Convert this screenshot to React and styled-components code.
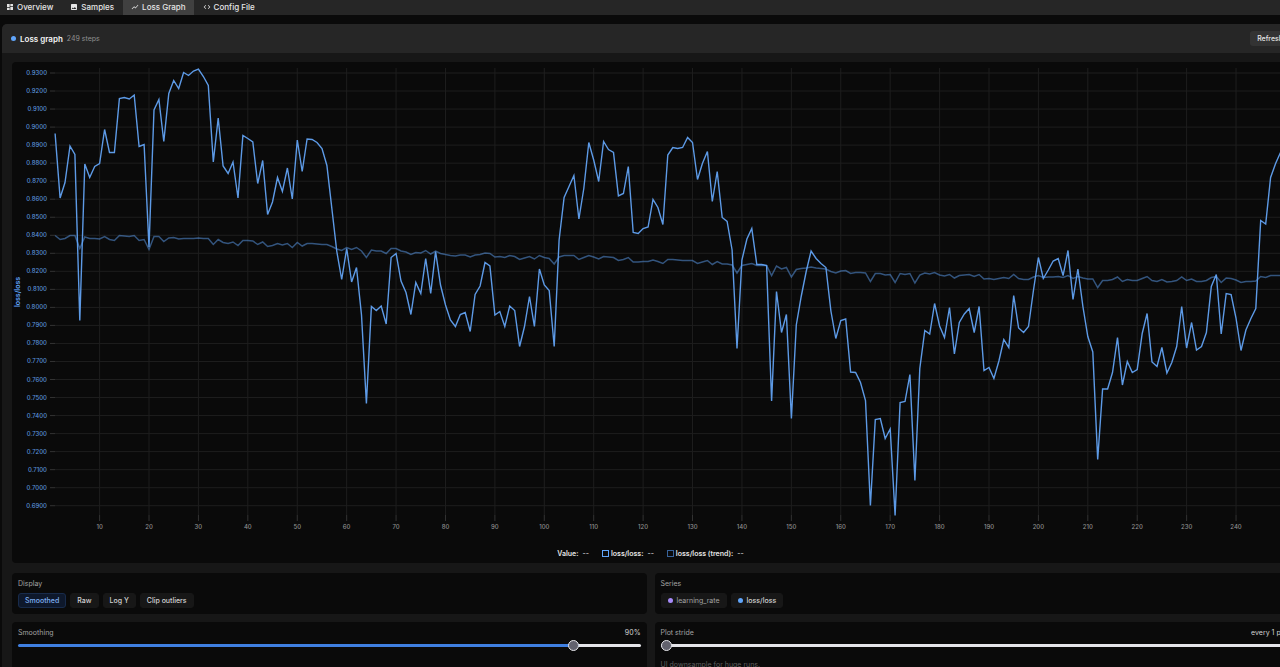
import { useState } from "react";
import styled, { createGlobalStyle } from "styled-components";
import { MdCode, MdDashboard, MdImage, MdShowChart } from "react-icons/md";

const GlobalStyle = createGlobalStyle`
  * {
    box-sizing: border-box;
  }
  body {
    margin: 0;
    background: #0a0a0a;
    color: #e5e5e5;
    font-family: Inter, "Liberation Sans", sans-serif;
    overflow: hidden;
  }
  button {
    font-family: inherit;
    cursor: pointer;
  }
`;

const Page = styled.div`
  width: 100%;
  min-width: 1301px;
  height: 100vh;
  overflow: hidden;
`;

const Tabs = styled.nav`
  display: flex;
  height: 15px;
  background: #262626;
`;

const Tab = styled.button`
  display: flex;
  align-items: center;
  gap: 3px;
  padding: 0 8px 2px;
  margin-right: 1px;
  border: none;
  background: ${(props) => (props.$active ? "#404040" : "transparent")};
  color: #e5e5e5;
  font-size: 8px;
  font-weight: 500;
  line-height: 12px;

  &:first-child {
    padding-left: 6px;
  }
`;

const Panel = styled.section`
  margin: 9px 2px 0;
  background: #171717;
  border-radius: 5px 5px 0 0;
  overflow: hidden;
`;

const PanelHeader = styled.header`
  display: flex;
  align-items: center;
  height: 29px;
  padding: 0 9px;
  background: #262626;
`;

const Dot = styled.span`
  width: 5px;
  height: 5px;
  border-radius: 50%;
  background: ${(props) => props.$color};
`;

const Title = styled.h1`
  margin: 0 4px;
  font-size: 8px;
  font-weight: 600;
  line-height: 12px;
  color: #f5f5f5;
`;

const Steps = styled.span`
  font-size: 7px;
  line-height: 12px;
  color: #8f8f8f;
`;

const Refresh = styled.button`
  margin-left: auto;
  height: 15px;
  padding: 0 7px;
  border: none;
  border-radius: 3px;
  background: #333333;
  color: #e5e5e5;
  font-size: 7px;
  font-weight: 500;
`;

const PanelBody = styled.div`
  padding: 9px 10px 12px;
`;

const ChartCard = styled.div`
  background: #0a0a0a;
  border-radius: 4px;
  overflow: hidden;
`;

const Plot = styled.svg`
  display: block;
  width: 100%;
  height: auto;
`;

const YLabel = styled.text`
  font-size: 6px;
  font-weight: 500;
  fill: #5b93dd;
  text-anchor: end;
`;

const XLabel = styled.text`
  font-size: 6px;
  font-weight: 500;
  fill: #8f8f8f;
  text-anchor: middle;
`;

const AxisTitle = styled.text`
  font-size: 7px;
  font-weight: 600;
  fill: #60a5fa;
  text-anchor: middle;
`;

const Legend = styled.div`
  display: flex;
  align-items: center;
  justify-content: center;
  gap: 13px;
  height: 19px;
  font-size: 7px;
  font-weight: 600;
  color: #e5e5e5;
`;

const LegendItem = styled.span`
  display: flex;
  align-items: center;
  gap: 2px;
`;

const Swatch = styled.i`
  width: 7px;
  height: 7px;
  border: 1px solid ${(props) => props.$color};
`;

const LegendValue = styled.span`
  margin-left: 2px;
  font-weight: 400;
`;

const Controls = styled.div`
  display: grid;
  grid-template-columns: 1fr 1fr;
  gap: 8px;
  margin-top: 10px;
`;

const Card = styled.div`
  padding: 6px;
  background: #0a0a0a;
  border-radius: 4px;
`;

const CardHead = styled.div`
  display: flex;
  justify-content: space-between;
  font-size: 7px;
  line-height: 10px;
  color: #a3a3a3;
`;

const Amount = styled.output`
  color: #d4d4d4;
`;

const Chips = styled.div`
  display: flex;
  gap: 4px;
  margin-top: 4px;
`;

const Chip = styled.button`
  display: flex;
  align-items: center;
  gap: 4px;
  height: 15px;
  padding: 0 6px;
  border: 1px solid ${(props) => (props.$active ? "#182b4b" : "#171717")};
  border-radius: 3px;
  background: ${(props) => (props.$active ? "#0e182b" : "#171717")};
  color: ${(props) =>
    props.$active ? "#7fb0f2" : props.$muted ? "#a3a3a3" : "#d4d4d4"};
  font-size: 7px;
  font-weight: ${(props) => (props.$muted ? 400 : 500)};
`;

const Slider = styled.input`
  display: block;
  appearance: none;
  width: 100%;
  height: 11px;
  margin: 2px 0 0;
  background: transparent;

  &::-webkit-slider-runnable-track {
    height: 3px;
    border-radius: 2px;
    background: linear-gradient(
      to right,
      #3f7fe0 ${(props) => props.$fill}%,
      #e5e5e9 ${(props) => props.$fill}%
    );
  }
  &::-webkit-slider-thumb {
    appearance: none;
    width: 11px;
    height: 11px;
    margin-top: -4px;
    border: 1px solid #e5e5e9;
    border-radius: 50%;
    background: #62626e;
  }
`;

const Hint = styled.p`
  margin: 9px 0 0;
  font-size: 7px;
  line-height: 10px;
  color: #5f5f5f;
`;

const tabs = [
  { name: "Overview", Icon: MdDashboard },
  { name: "Samples", Icon: MdImage },
  { name: "Loss Graph", Icon: MdShowChart },
  { name: "Config File", Icon: MdCode },
];

// plot heights, one per step
const loss = [
  133.5, 198, 182.5, 146, 154.5, 320.5, 164, 177.5, 166.5, 163.5,
  129.5, 152.5, 152.5, 98.5, 97.5, 99, 95, 146.5, 144.5, 247,
  110, 99.5, 141.5, 93.5, 80.5, 88.5, 72.5, 75.5, 71, 69,
  76.5, 85.5, 162, 118, 166, 173.5, 162, 198, 135.5, 138.5,
  142, 183.5, 160.5, 214.5, 202, 177.5, 191.5, 168, 199, 140,
  171.5, 139, 139.5, 142.5, 148.5, 165.5, 208, 251.5, 279.5, 248.5,
  282, 267.5, 315, 403.5, 306.5, 310.5, 306, 324, 257.5, 253.5,
  281, 292.5, 314.5, 282.5, 293.5, 258.5, 293.5, 251.5, 285, 305,
  320, 326.5, 314.5, 312.5, 331.5, 294.5, 286, 262.5, 266, 315,
  311.5, 326.5, 306, 310.5, 346.5, 326.5, 296.5, 326.5, 269, 285,
  290.5, 346.5, 240, 197.5, 186.5, 175.5, 219, 188.5, 142.5, 160,
  181.5, 141.5, 149.5, 152.5, 196, 193.5, 166.5, 232.5, 233.5, 228.5,
  227, 199.5, 207.5, 224.5, 155, 147.5, 148.5, 147.5, 137.5, 142.5,
  179.5, 163.5, 151.5, 201.5, 171.5, 217.5, 221.5, 250, 348.5, 260,
  239, 228.5, 264.5, 264.5, 265.5, 401, 291.5, 332.5, 314.5, 418.5,
  325, 296.5, 271.5, 251, 258.5, 263.5, 267.5, 311, 338.5, 320.5,
  319, 372, 372.5, 382.5, 400.5, 505.5, 419.5, 418.5, 438.5, 429,
  515.5, 402.5, 401.5, 374.5, 480.5, 368.5, 330.5, 334, 303.5, 326,
  337.5, 307.5, 354, 322.5, 314, 308.5, 332.5, 306.5, 370.5, 367.5,
  378.5, 361, 339.5, 347.5, 295.5, 328, 332.5, 326.5, 290, 257.5,
  278.5, 270, 261, 258.5, 275.5, 250.5, 299.5, 269, 306.5, 336.5,
  352, 459.5, 389, 389, 372.5, 337.5, 385, 361.5, 372.5, 369.5,
  333.5, 313.5, 362, 366.5, 347.5, 373, 362.5, 346.5, 306.5, 348,
  322.5, 350, 346.5, 332.5, 286.5, 274.5, 334, 293.5, 294.5, 318,
  350.5, 330, 318.5, 308.5, 220.5, 224, 177.5, 163.5, 152.5,
];

const trend = [
  235.5, 239.5, 238.5, 235.5, 235.5, 248.5, 237, 238.5, 238.5, 239,
  236.5, 239.5, 240.5, 235.5, 236, 236.5, 235.5, 240.5, 239.5, 249.5,
  236.5, 236.5, 241.5, 238, 237.5, 239, 238.5, 238.5, 238.5, 238,
  238.5, 238.5, 244.5, 239.5, 242.5, 243.5, 242, 245.5, 240.5, 240.5,
  241, 244.5, 242, 246.5, 245.5, 243.5, 245, 243.5, 247.5, 242.5,
  246, 243.5, 243.5, 244, 244.5, 244.5, 246.5, 249, 250.5, 247.5,
  249.5, 247.5, 251, 257.5, 250, 251, 251, 253.5, 248.5, 248.5,
  251, 252, 254.5, 252.5, 253, 250.5, 254, 251, 253.5, 254.5,
  255.5, 256, 255, 255, 257, 255, 254.5, 253, 253.5, 257,
  256.5, 257.5, 255.5, 256.5, 259.5, 258, 256.5, 259, 255.5, 257.5,
  258.5, 264, 257, 255.5, 255.5, 255.5, 259.5, 257.5, 255.5, 257,
  259, 256.5, 257, 257.5, 260.5, 259.5, 257.5, 262, 262, 261.5,
  261.5, 260, 261.5, 263.5, 259.5, 259.5, 260, 260.5, 260.5, 260.5,
  263.5, 262, 260.5, 264.5, 261.5, 264, 264, 265, 273, 265.5,
  264.5, 263.5, 265.5, 265.5, 265.5, 275.5, 266, 269, 267.5, 277,
  269.5, 268.5, 268, 267, 268, 268.5, 269, 271.5, 273, 271,
  270.5, 273.5, 272.5, 272.5, 273, 281.5, 273.5, 273.5, 275, 274.5,
  282.5, 273.5, 274.5, 273.5, 283, 275, 273, 274, 272.5, 275,
  276, 274.5, 278, 275.5, 275, 274.5, 276.5, 274.5, 279, 278.5,
  279.5, 278.5, 277.5, 278.5, 274.5, 278.5, 279.5, 279.5, 277, 275.5,
  277.5, 277, 277, 276.5, 277.5, 275.5, 278.5, 276.5, 278, 279,
  279, 287.5, 280.5, 280.5, 279.5, 277, 281.5, 279.5, 280.5, 280.5,
  278.5, 276.5, 280.5, 281.5, 279.5, 282, 281.5, 280.5, 277, 280.5,
  279, 281.5, 281.5, 280.5, 277.5, 276.5, 282.5, 278, 278.5, 280,
  282.5, 281.5, 281.5, 281, 276.5, 277.5, 275.5, 275.5, 275.5,
];

const stepX = (step) => 50.2 + step * 4.941;
const toPoints = (series) =>
  series.map((y, i) => `${stepX(i + 1).toFixed(1)},${y}`).join(" ");

const yTicks = Array.from({ length: 25 }, (_, i) => ({
  label: (0.93 - i * 0.01).toFixed(4),
  y: 73 + i * 18.03,
}));
const xTicks = Array.from({ length: 24 }, (_, i) => (i + 1) * 10);

const LossPlot = () => (
  <Plot viewBox="12 62 1277 482" role="img" aria-label="loss/loss by step">
    {yTicks.map(({ label, y }) => (
      <g key={label}>
        <line x1="55" x2="1281" y1={y} y2={y} stroke="#1e1e1e" />
        <line x1="50" x2="55" y1={y} y2={y} stroke="#333333" />
        <YLabel x="47" y={y + 2}>
          {label}
        </YLabel>
      </g>
    ))}
    {xTicks.map((step) => (
      <g key={step}>
        <line x1={stepX(step)} x2={stepX(step)} y1="68" y2="515" stroke="#1e1e1e" />
        <line x1={stepX(step)} x2={stepX(step)} y1="515" y2="521" stroke="#333333" />
        <XLabel x={stepX(step)} y="529">
          {step}
        </XLabel>
      </g>
    ))}
    <AxisTitle transform="translate(20 292) rotate(-90)">loss/loss</AxisTitle>
    <polyline points={toPoints(loss)} fill="none" stroke="#5d9ae6" strokeWidth="1.4" />
    <polyline
      points={toPoints(trend)}
      fill="none"
      stroke="#60a5fa"
      strokeOpacity="0.48"
      strokeWidth="1.5"
    />
  </Plot>
);

const App = () => {
  const [tab, setTab] = useState("Loss Graph");
  const [display, setDisplay] = useState("Smoothed");
  const [smoothing, setSmoothing] = useState(90);
  const [stride, setStride] = useState(1);

  return (
    <Page>
      <GlobalStyle />
      <Tabs>
        {tabs.map(({ name, Icon }) => (
          <Tab key={name} $active={tab === name} onClick={() => setTab(name)}>
            <Icon size={8} />
            {name}
          </Tab>
        ))}
      </Tabs>
      <Panel>
        <PanelHeader>
          <Dot $color="#60a5fa" />
          <Title>Loss graph</Title>
          <Steps>249 steps</Steps>
          <Refresh>Refresh</Refresh>
        </PanelHeader>
        <PanelBody>
          <ChartCard>
            <LossPlot />
            <Legend>
              <LegendItem>
                Value: <LegendValue>--</LegendValue>
              </LegendItem>
              <LegendItem>
                <Swatch $color="#60a5fa" />
                loss/loss: <LegendValue>--</LegendValue>
              </LegendItem>
              <LegendItem>
                <Swatch $color="#37629a" />
                loss/loss (trend): <LegendValue>--</LegendValue>
              </LegendItem>
            </Legend>
          </ChartCard>
          <Controls>
            <Card>
              <CardHead>Display</CardHead>
              <Chips>
                {["Smoothed", "Raw", "Log Y", "Clip outliers"].map((item) => (
                  <Chip
                    key={item}
                    $active={display === item}
                    onClick={() => setDisplay(item)}
                  >
                    {item}
                  </Chip>
                ))}
              </Chips>
            </Card>
            <Card>
              <CardHead>Series</CardHead>
              <Chips>
                <Chip $muted>
                  <Dot $color="#a78bfa" />
                  learning_rate
                </Chip>
                <Chip>
                  <Dot $color="#60a5fa" />
                  loss/loss
                </Chip>
              </Chips>
            </Card>
            <Card>
              <CardHead>
                <label htmlFor="smoothing">Smoothing</label>
                <Amount htmlFor="smoothing">{smoothing}%</Amount>
              </CardHead>
              <Slider
                id="smoothing"
                type="range"
                min="0"
                max="100"
                value={smoothing}
                $fill={smoothing}
                onChange={(e) => setSmoothing(Number(e.target.value))}
              />
            </Card>
            <Card>
              <CardHead>
                <label htmlFor="stride">Plot stride</label>
                <Amount htmlFor="stride">every {stride} pt</Amount>
              </CardHead>
              <Slider
                id="stride"
                type="range"
                min="1"
                max="20"
                value={stride}
                $fill={((stride - 1) / 19) * 100}
                onChange={(e) => setStride(Number(e.target.value))}
              />
              <Hint>UI downsample for huge runs.</Hint>
            </Card>
          </Controls>
        </PanelBody>
      </Panel>
    </Page>
  );
};

export default App;
